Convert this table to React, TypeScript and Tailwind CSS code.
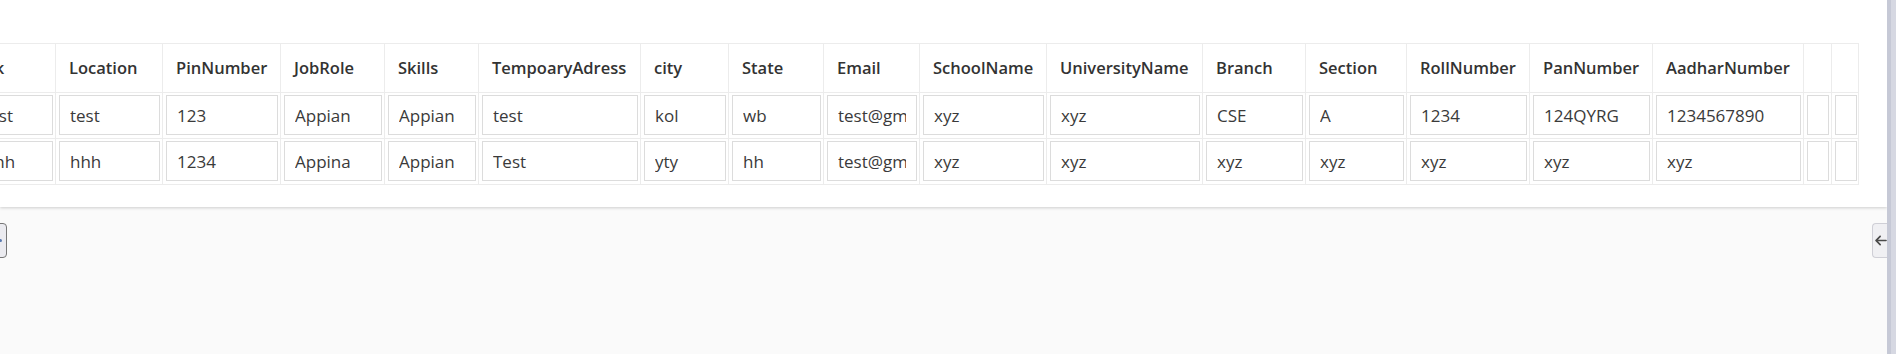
import React from "react";

const headers = [
  "Work",
  "Location",
  "PinNumber",
  "JobRole",
  "Skills",
  "TempoaryAdress",
  "city",
  "State",
  "Email",
  "SchoolName",
  "UniversityName",
  "Branch",
  "Section",
  "RollNumber",
  "PanNumber",
  "AadharNumber",
  "",
  "",
];

const rows = [
  ["ttestst", "test", "123", "Appian", "Appian", "test", "kol", "wb", "test@gmail.com", "xyz", "xyz", "CSE", "A", "1234", "124QYRG", "1234567890", "", ""],
  ["hhhhh", "hhh", "1234", "Appina", "Appian", "Test", "yty", "hh", "test@gmail.com", "xyz", "xyz", "xyz", "xyz", "xyz", "xyz", "xyz", "", ""],
];

function ArrowLeft() {
  return (
    <svg width="12" height="11" viewBox="0 0 448 420" className="text-[#4a4a4a]">
      <path
        fill="currentColor"
        d="M9.4 187.4c-12.5 12.5-12.5 32.8 0 45.3l160 160c12.5 12.5 32.8 12.5 45.3 0s12.5-32.8 0-45.3L109.3 242H416c17.7 0 32-14.3 32-32s-14.3-32-32-32H109.3L214.6 72.6c12.5-12.5 12.5-32.8 0-45.3s-32.8-12.5-45.3 0l-160 160z"
      />
    </svg>
  );
}

export default function App() {
  return (
    <div
      className="w-[1896px] h-[354px] bg-[#fafafa] flex overflow-hidden"
      style={{ fontFamily: "'Open Sans', 'Noto Sans', sans-serif" }}
    >
      <div className="w-[1887px] flex flex-col overflow-hidden">
        <div className="bg-white h-[207px] pt-[43px] shadow-[0_1px_3px_rgba(0,0,0,0.18)] relative z-10 overflow-hidden">
          <div className="-ml-[52px] w-max grid grid-cols-[107px_107px_118px_104px_94px_162px_88px_95px_96px_127px_156px_103px_101px_123px_123px_151px_28px_27px] border-r border-b border-[#ececec]">
            {headers.map((h, i) => (
              <div
                key={"h" + i}
                className="h-[49px] border-l border-t border-[#ececec] px-[13px] flex items-center text-[16.5px] font-semibold text-[#333] whitespace-nowrap overflow-hidden"
              >
                {h}
              </div>
            ))}
            {rows.map((r, ri) =>
              r.map((v, ci) => (
                <div
                  key={ri + "-" + ci}
                  className="h-[46px] border-l border-t border-[#ececec] pl-[3px] pr-[2px] pt-[2px] pb-[3px]"
                >
                  <input
                    readOnly
                    value={v}
                    className="w-full h-[40px] border border-[#dcdcdc] bg-white px-[10px] text-[17px] text-[#3a3a3a] outline-none"
                    style={{ fontFamily: "'Open Sans', 'Noto Sans', sans-serif" }}
                  />
                </div>
              ))
            )}
          </div>
        </div>
        <div className="mt-[16px] flex justify-between">
          <div className="-ml-[23px] w-[30px] h-[35px] rounded-r-[4px] border border-[#777] bg-[#ebebf0] flex items-center justify-end pr-[4px]">
            <span className="w-[3px] h-[3px] rounded-full bg-[#5a7bb0]" />
          </div>
          <div className="w-[15px] h-[35px] rounded-l-[4px] border border-r-0 border-[#cfcfd6] bg-[#f0f0f3] flex items-center justify-center pl-[2px]">
            <ArrowLeft />
          </div>
        </div>
      </div>
      <div className="w-[9px] h-full bg-[#d6d8e2] border-l-[4px] border-[#c6c9d6]" />
    </div>
  );
}
